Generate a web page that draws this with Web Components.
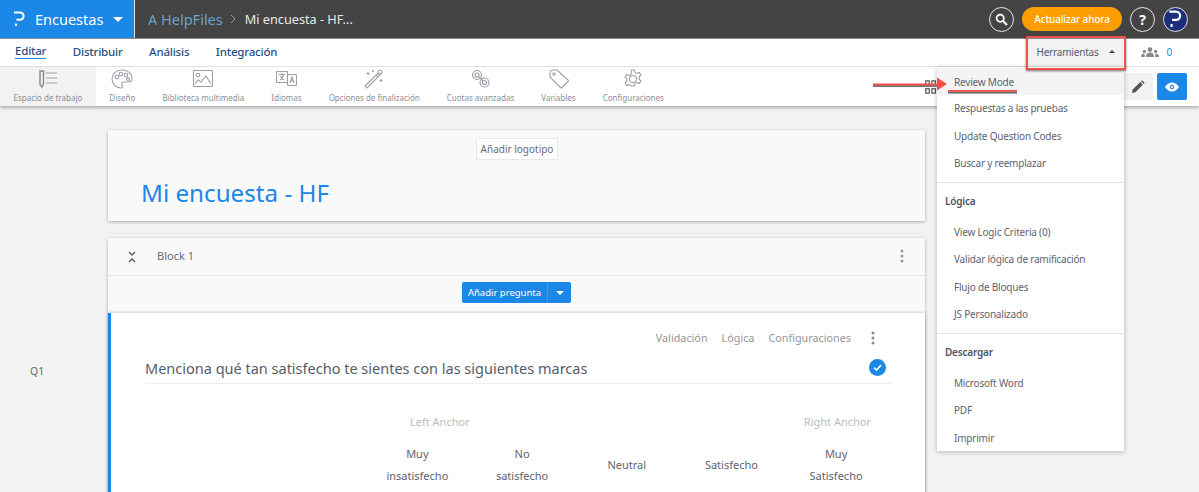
<!DOCTYPE html>
<html lang="es">
<head>
<meta charset="utf-8">
<title>Encuestas</title>
<style>
html, body { margin: 0; height: 100%; overflow: hidden; background: #f2f2f2; }
body { font-family: "Noto Sans", "Open Sans", sans-serif; color: #5a6270; }
</style>
</head>
<body>
<app-shell></app-shell>

<script>
const STROKE = 'fill="none" stroke="#9aa0a8" stroke-width="1.1"';

class TopBar extends HTMLElement {
    connectedCallback() {
        this.attachShadow({mode: 'open'}).innerHTML = `
<style>
:host { display: flex; height: 38px; background: #444; border-bottom: 1px solid #8c8c8c; }
.brand { width: 134px; background: #1b87e6; border-right: 1px solid #ddd; display: flex; align-items: center; color: #fff; font-size: 14.5px; }
.brand svg { margin-left: 14px; margin-right: 10px; }
.brand i { margin-left: 10px; border: 5px solid transparent; border-top-color: #fff; border-bottom: 0; }
.crumbs { display: flex; align-items: center; flex: 1; padding-left: 13px; font-size: 12.7px; color: #e8e8e8; }
.crumbs b { font-weight: 400; color: #6aa3c4; font-size: 14.5px; }
.crumbs svg { margin: 0 8px 0 7px; }
.tools { display: flex; align-items: center; gap: 8px; margin-right: 11px; }
.round { width: 23px; height: 23px; border: 1px solid #e8e8e8; border-radius: 50%; display: flex; align-items: center; justify-content: center; color: #fff; font-size: 14px; font-weight: 700; }
.up { background: #ff9e00; color: #fff; border-radius: 13px; font-size: 10px; letter-spacing: -.15px; height: 24px; width: 100px; display: flex; align-items: center; justify-content: center; font-weight: 500; }
.user { background: #1c2f7c; border-color: #ddd; }
</style>
<div class="brand">
  <svg width="11" height="16" viewBox="0 0 11 16" fill="none" stroke="#fff" stroke-width="2.1"><path d="M0 1.500h6a3.600 3.600 0 0 1 0 7.200H2.500"/><path d="M2 12.500v2.500"/></svg>
  Encuestas<i></i>
</div>
<div class="crumbs"><b>A HelpFiles</b>
  <svg width="7" height="10" viewBox="0 0 7 10" fill="none" stroke="#999" stroke-width="1"><path d="M1 1l4 4-4 4"/></svg>
  Mi encuesta - HF...
</div>
<div class="tools">
  <span class="round"><svg width="13" height="13" viewBox="0 0 13 13" fill="none" stroke="#fff" stroke-width="1.7"><circle cx="5.2" cy="5.2" r="3.6"/><path d="M8 8l4 4" stroke-width="2.2"/></svg></span>
  <span class="up">Actualizar ahora</span>
  <span class="round">?</span>
  <span class="round user"><svg width="15" height="18" viewBox="0 0 11 16" fill="none" stroke="#fff" stroke-width="2"><path d="M0 1.500h6a3.600 3.600 0 0 1 0 7.200H2.500"/><path d="M2 12.500v2.500"/></svg></span>
</div>`;
    }
}

class NavBar extends HTMLElement {
    connectedCallback() {
        this.attachShadow({mode: 'open'}).innerHTML = `
<style>
:host { display: flex; align-items: center; height: 27px; background: #fff; padding-left: 15px; font-size: 11.5px; letter-spacing: -.2px; color: #1f4f82; border-bottom: 1px solid #e3e3e3; }
a { margin: 0 26.5px 2px 0; font-weight: 500; }
a.on { border-bottom: 1px solid #1b87e6; line-height: 14px; }
.side { margin-left: auto; display: flex; align-items: center; height: 100%; }
.tools { width: 96px; height: 100%; background: #f2f2f2; color: #555d6b; font-size: 10px; letter-spacing: -.2px; display: flex; align-items: center; padding: 0 0 2px 9px; box-sizing: border-box; }
.tools i { margin-left: 10px; border: 3.5px solid transparent; border-bottom-color: #444; border-top: 0; }
.team { display: flex; align-items: center; margin: 0 27px 2px 18px; color: #1b87e6; font-size: 10px; }
.team svg { margin-right: 7px; }
</style>
<a class="on">Editar</a><a>Distribuir</a><a>Análisis</a><a>Integración</a>
<div class="side">
  <div class="tools">Herramientas<i></i></div>
  <div class="team"><svg width="18" height="10" viewBox="0 0 18 10" fill="#888"><circle cx="9" cy="2.6" r="2.4"/><path d="M5 10c0-3 1.6-4.4 4-4.4s4 1.4 4 4.4z"/><circle cx="3.4" cy="4.4" r="1.6"/><path d="M0 10c0-2 1.200-3.400 3.400-3.400L4 10z"/><circle cx="14.600" cy="4.400" r="1.600"/><path d="M18 10c0-2-1.200-3.400-3.400-3.400L14 10z"/></svg>0</div>
</div>`;
    }
}

class ToolItem extends HTMLElement {
    connectedCallback() {
        this.attachShadow({mode: 'open'}).innerHTML = `
<style>
:host { display: flex; flex-direction: column; align-items: center; justify-content: flex-end; height: 100%; box-sizing: border-box; padding: 0 13.5px 3px; font-size: 8px; color: #8a9099; white-space: nowrap; }
:host([active]) { background: #f2f2f2; }
.icon { height: 24px; display: flex; align-items: center; margin-bottom: 2px; }
</style>
<div class="icon"><slot name="icon"></slot></div><slot></slot>`;
    }
}

class ToolBar extends HTMLElement {
    connectedCallback() {
        this.attachShadow({mode: 'open'}).innerHTML = `
<style>
:host { display: flex; height: 39px; background: #fff; box-shadow: 0 2px 3px rgba(0,0,0,.28); position: relative; }
.items { display: flex; flex: 1; height: 100%; }
.edit { width: 30px; height: 27px; background: #f2f2f2; border-radius: 2px; display: flex; align-items: center; justify-content: center; align-self: center; }
.eye { width: 30px; height: 27px; background: #1b87e6; border-radius: 2px; display: flex; align-items: center; justify-content: center; align-self: center; margin: 0 12px 0 4px; }
.qr { align-self: center; margin-right: 185px; }
</style>
<div class="items"><slot></slot></div>
<svg class="qr" width="14" height="14" viewBox="0 0 14 16" fill="none" stroke="#555" stroke-width="1.4"><rect x="1" y="1" width="4" height="5"/><rect x="8" y="1" width="4" height="5"/><rect x="1" y="10" width="4" height="5"/><rect x="8" y="10" width="4" height="5"/></svg>
<div class="edit"><svg width="14" height="14" viewBox="0 0 14 14" fill="#555"><path d="M1 13l.7-3.400 7.500-7.500 2.700 2.700-7.500 7.500z"/><path d="M10 1.300l1-1 2.700 2.700-1 1z"/></svg></div>
<div class="eye"><svg width="14" height="10" viewBox="0 0 14 10"><path d="M0 5c2-3 4.300-4.500 7-4.500S12 2 14 5c-2 3-4.300 4.500-7 4.500S2 8 0 5z" fill="#fff"/><circle cx="7" cy="5" r="2.200" fill="#1b87e6"/><circle cx="7" cy="5" r="1.100" fill="#fff"/></svg></div>`;
    }
}

class ToolsMenu extends HTMLElement {
    connectedCallback() {
        this.attachShadow({mode: 'open'}).innerHTML = `
<style>
:host { display: block; position: absolute; left: 937px; top: 67px; width: 187px; height: 384px; background: #fff; box-shadow: 0 1px 5px rgba(0,0,0,.25); font-size: 10px; letter-spacing: -.2px; color: #5c6472; }
.item { height: 27.5px; line-height: 27.5px; padding-left: 17px; white-space: nowrap; }
.item.on { background: #f4f4f4; height: 28px; line-height: 30px; }
.head { padding-left: 8px; font-weight: 600; height: 36px; line-height: 37px; color: #4d5562; }
hr { border: 0; border-top: 1px solid #e6e6e6; margin: 4px 0 0; }
</style>
<div class="item on">Review Mode</div>
<div class="item">Respuestas a las pruebas</div>
<div class="item">Update Question Codes</div>
<div class="item">Buscar y reemplazar</div>
<hr>
<div class="head">Lógica</div>
<div class="item">View Logic Criteria (0)</div>
<div class="item">Validar lógica de ramificación</div>
<div class="item">Flujo de Bloques</div>
<div class="item">JS Personalizado</div>
<hr>
<div class="head">Descargar</div>
<div class="item">Microsoft Word</div>
<div class="item">PDF</div>
<div class="item">Imprimir</div>`;
    }
}

class CalloutMarks extends HTMLElement {
    connectedCallback() {
        this.attachShadow({mode: 'open'}).innerHTML = `
<style>
:host { display: block; position: absolute; left: 0; top: 0; width: 1199px; height: 110px; pointer-events: none; }
.box { position: absolute; left: 1026px; top: 36px; width: 96px; height: 30px; border: 2px solid #f0524a; box-shadow: 0 1px 2px rgba(0,0,0,.55); }
svg { position: absolute; left: 870px; top: 76px; }
</style>
<div class="box"></div>
<svg width="150" height="20" viewBox="0 0 150 20">
  <path d="M3 10h70" stroke="#777" stroke-width="2"/>
  <path d="M3 8.500h68" stroke="#f0524a" stroke-width="1.800"/>
  <path d="M67 1.500l10 6.500-10 6.500z" fill="#f0524a"/>
  <path d="M78 16.500h69" stroke="#666" stroke-width="2"/>
  <path d="M78 14.800h69" stroke="#f0524a" stroke-width="1.800"/>
</svg>`;
    }
}

class SurveyHeader extends HTMLElement {
    connectedCallback() {
        this.attachShadow({mode: 'open'}).innerHTML = `
<style>
:host { display: block; height: 91px; background: #f9f9f9; box-shadow: 0 1px 3px rgba(0,0,0,.3); position: relative; }
.logo { position: absolute; left: 368px; top: 8px; height: 20px; width: 80px; background: #fff; border: 1px solid #e8e8e8; font-size: 10px; color: #666c78; display: flex; align-items: center; justify-content: center; }
h1 { margin: 0; padding: 46px 0 0 33px; font-weight: 400; font-size: 24.2px; line-height: 33px; color: #1b87e6; }
</style>
<div class="logo">Añadir logotipo</div>
<h1>Mi encuesta - HF</h1>`;
    }
}

class SurveyBlock extends HTMLElement {
    connectedCallback() {
        this.attachShadow({mode: 'open'}).innerHTML = `
<style>
:host { display: block; background: #f9f9f9; box-shadow: 0 1px 3px rgba(0,0,0,.3); }
.top { height: 35px; display: flex; align-items: center; border-bottom: 1px solid #e6e6e6; padding: 0 21px 2px 20px; font-size: 11px; color: #666c78; }
.top svg.x { margin-right: 21px; margin-top: 2px; }
.dots { margin-left: auto; }
.add { height: 31px; display: flex; align-items: flex-start; justify-content: center; padding-top: 6px; }
.btn { display: flex; height: 21px; background: #1b87e6; color: #fff; font-size: 9.5px; border-radius: 2px; align-items: center; }
.btn span { padding: 0 6px; border-right: 1px solid #3d9aea; line-height: 21px; }
.btn i { width: 23px; display: flex; justify-content: center; }
.btn i::before { content: ""; border: 4px solid transparent; border-top-color: #fff; border-bottom: 0; }
</style>
<div class="top">
  <svg class="x" width="8" height="12" viewBox="0 0 8 12" fill="none" stroke="#555" stroke-width="1.3"><path d="M1 1l3 3 3-3M1 11l3-3 3 3"/></svg>
  Block 1
  <svg class="dots" width="4" height="14" viewBox="0 0 4 14" fill="#999"><circle cx="2" cy="2" r="1.500"/><circle cx="2" cy="7" r="1.500"/><circle cx="2" cy="12" r="1.500"/></svg>
</div>
<div class="add"><div class="btn"><span>Añadir pregunta</span><i></i></div></div>
<slot></slot>`;
    }
}

class ScaleHeader extends HTMLElement {
    connectedCallback() {
        this.attachShadow({mode: 'open'}).innerHTML = `
<style>
:host { display: flex; width: 104.7px; height: 100%; align-items: center; justify-content: center; text-align: center; font-size: 11px; line-height: 22px; color: #5c6472; }
</style>
<div><slot></slot></div>`;
    }
}

class QuestionCard extends HTMLElement {
    connectedCallback() {
        this.attachShadow({mode: 'open'}).innerHTML = `
<style>
:host { display: block; height: 200px; background: #fff; border-left: 3px solid #1b87e6; box-shadow: 0 0 3px rgba(0,0,0,.3); position: relative; padding: 0 33px 0 34px; }
.acts { display: flex; justify-content: flex-end; align-items: center; height: 49px; font-size: 10.8px; color: #93979d; padding-right: 17px; }
.acts span { margin-left: 14px; }
.acts svg { margin-left: 20px; }
.q { display: flex; justify-content: space-between; align-items: center; height: 19px; border-bottom: 1px solid #eee; padding: 0 6px 6px 0; margin-top: -4px; font-size: 14.5px; color: #555c69; }
.anchors { display: flex; justify-content: space-between; font-size: 11px; color: #b9bcc2; padding: 30px 21px 0 265px; }
.scale { display: flex; height: 50px; margin: 11px 0 0 220px; }
</style>
<div class="acts"><span>Validación</span><span>Lógica</span><span>Configuraciones</span>
  <svg width="4" height="14" viewBox="0 0 4 14" fill="#888"><circle cx="2" cy="2" r="1.500"/><circle cx="2" cy="7" r="1.500"/><circle cx="2" cy="12" r="1.500"/></svg>
</div>
<div class="q">Menciona qué tan satisfecho te sientes con las siguientes marcas
  <svg width="17" height="17" viewBox="0 0 17 17"><circle cx="8.500" cy="8.500" r="8.500" fill="#1b87e6"/><path d="M5 8.700l2.500 2.400 4.500-5" fill="none" stroke="#fff" stroke-width="1.600"/></svg>
</div>
<div class="anchors"><span>Left Anchor</span><span>Right Anchor</span></div>
<div class="scale"><slot></slot></div>`;
    }
}

class AppShell extends HTMLElement {
    connectedCallback() {
        this.attachShadow({mode: 'open'}).innerHTML = `
<style>
:host { display: block; height: 492px; overflow: hidden; position: relative; }
main { display: flex; padding-top: 24px; }
.gutter { width: 108px; flex: none; position: relative; }
.qn { position: absolute; left: 30px; top: 234px; font-size: 10.5px; color: #666c78; }
.col { width: 817px; display: flex; flex-direction: column; gap: 17px; }
</style>
<top-bar></top-bar>
<nav-bar></nav-bar>
<tool-bar>
  <tool-item active><svg slot="icon" width="20" height="20" viewBox="0 0 20 20" ${STROKE}><path d="M2 2h3.500v13l-1.700 3L2 15z" stroke="#888" stroke-width="1.400"/><path d="M8 4h11M8 9h11M8 14h11"/></svg>Espacio de trabajo</tool-item>
  <tool-item><svg slot="icon" width="22" height="20" viewBox="0 0 22 20" ${STROKE}><path d="M11 1C5 1 1 5 1 10c0 5 4 9 9 9 2 0 2-2 1-3-1-2 0-3 2-3h4c3 0 4-2 4-4 0-5-5-8-10-8z"/><circle cx="6" cy="8" r="1.800"/><circle cx="10" cy="5" r="1.800"/><circle cx="15" cy="6" r="1.800"/><circle cx="17" cy="10" r="1.400"/></svg>Diseño</tool-item>
  <tool-item><svg slot="icon" width="20" height="17" viewBox="0 0 20 17" ${STROKE}><rect x=".5" y=".5" width="19" height="16" rx="1"/><circle cx="5" cy="5" r="1.800"/><path d="M2 14l3-4 3 2 5-6 5 8"/></svg>Biblioteca multimedia</tool-item>
  <tool-item><svg slot="icon" width="21" height="15" viewBox="0 0 21 15" ${STROKE}><rect x=".5" y=".5" width="11" height="11" rx="1"/><rect x="11.500" y="3.500" width="9" height="11" rx="1" fill="#fff"/><path d="M3 3.500h6M6 2v2M4 9c2-1 3-3 3.500-5M4.500 5c.5 2 2 3.500 3.500 4"/><path d="M14 12l2-6 2 6M14.700 10h2.600"/></svg>Idiomas</tool-item>
  <tool-item><svg slot="icon" width="20" height="20" viewBox="0 0 20 20" ${STROKE}><path d="M1 17l13-13 2 2L3 19z"/><path d="M12 6l2 2"/><path d="M4 3v3M2.500 4.500h3M17 10v3M15.500 11.500h3M9 1v2M8 2h2"/><circle cx="16" cy="3" r="2"/></svg>Opciones de finalización</tool-item>
  <tool-item><svg slot="icon" width="20" height="20" viewBox="0 0 20 20" ${STROKE}><circle cx="6" cy="6" r="4.500"/><circle cx="6" cy="6" r="2"/><circle cx="13.500" cy="13.500" r="4.500"/><circle cx="13.500" cy="13.500" r="2"/><path d="M8 8l4 4"/></svg>Cuotas avanzadas</tool-item>
  <tool-item><svg slot="icon" width="20" height="20" viewBox="0 0 20 20" ${STROKE}><path d="M1 4c0-2 1-3 3-3h4l11 10c.5.5.5 1 0 1.500l-6 6c-.5.500-1 .500-1.500 0L1 8z"/><circle cx="5" cy="5" r="1.200"/></svg>Variables</tool-item>
  <tool-item><svg slot="icon" width="20" height="20" viewBox="0 0 20 20" ${STROKE}><circle cx="10" cy="10" r="3.500"/><path d="M8.500 1h3l.5 2.500 2 1 2.300-1 1.600 2.600-1.800 1.700v2.400l1.800 1.700-1.600 2.600-2.300-1-2 1-.5 2.500h-3L8 16.500l-2-1-2.300 1-1.600-2.600 1.800-1.700V9.800L2.100 8.100l1.600-2.600 2.300 1 2-1z"/></svg>Configuraciones</tool-item>
</tool-bar>
<main>
  <div class="gutter"><span class="qn">Q1</span></div>
  <div class="col">
    <survey-header></survey-header>
    <survey-block>
      <question-card>
        <scale-header>Muy<br>insatisfecho</scale-header>
        <scale-header>No<br>satisfecho</scale-header>
        <scale-header>Neutral</scale-header>
        <scale-header>Satisfecho</scale-header>
        <scale-header>Muy<br>Satisfecho</scale-header>
      </question-card>
    </survey-block>
  </div>
</main>
<tools-menu></tools-menu>
<callout-marks></callout-marks>`;
    }
}

customElements.define('top-bar', TopBar);
customElements.define('nav-bar', NavBar);
customElements.define('tool-item', ToolItem);
customElements.define('tool-bar', ToolBar);
customElements.define('tools-menu', ToolsMenu);
customElements.define('callout-marks', CalloutMarks);
customElements.define('survey-header', SurveyHeader);
customElements.define('survey-block', SurveyBlock);
customElements.define('scale-header', ScaleHeader);
customElements.define('question-card', QuestionCard);
customElements.define('app-shell', AppShell);
</script>
</body>
</html>
